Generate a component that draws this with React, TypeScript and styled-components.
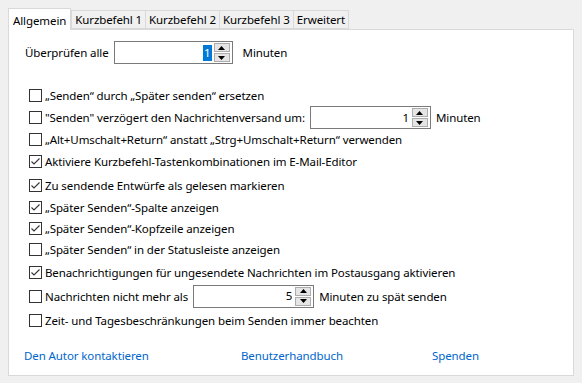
import React from "react";
import styled, { createGlobalStyle } from "styled-components";

const GlobalStyle = createGlobalStyle`
  html, body {
    margin: 0;
    padding: 0;
    background: #f0f0f0;
  }
  body {
    font-family: "Noto Sans", "Open Sans", sans-serif;
    font-size: 11.5px;
    letter-spacing: -0.1px;
    color: #000;
  }
`;

const tabs = ["Allgemein", "Kurzbefehl 1", "Kurzbefehl 2", "Kurzbefehl 3", "Erweitert"];

type Opt = {
  label: string;
  checked: boolean;
  spin?: { value: string; width: number; suffix: string };
  h: number;
};

const options: Opt[] = [
  { label: "„Senden“ durch „Später senden“ ersetzen", checked: false, h: 22 },
  {
    label: "\"Senden\" verzögert den Nachrichtenversand um:",
    checked: false,
    spin: { value: "1", width: 121, suffix: "Minuten" },
    h: 23
  },
  { label: "„Alt+Umschalt+Return“ anstatt „Strg+Umschalt+Return“ verwenden", checked: false, h: 21 },
  { label: "Aktiviere Kurzbefehl-Tastenkombinationen im E-Mail-Editor", checked: true, h: 23 },
  { label: "Zu sendende Entwürfe als gelesen markieren", checked: true, h: 24 },
  { label: "„Später Senden“-Spalte anzeigen", checked: true, h: 21 },
  { label: "„Später Senden“-Kopfzeile anzeigen", checked: true, h: 20 },
  { label: "„Später Senden“ in der Statusleiste anzeigen", checked: false, h: 22 },
  { label: "Benachrichtigungen für ungesendete Nachrichten im Postausgang aktivieren", checked: true, h: 24 },
  {
    label: "Nachrichten nicht mehr als",
    checked: false,
    spin: { value: "5", width: 121, suffix: "Minuten zu spät senden" },
    h: 24
  },
  { label: "Zeit- und Tagesbeschränkungen beim Senden immer beachten", checked: false, h: 24 }
];

export default function App() {
  return (
    <Page>
      <GlobalStyle />
      <TabBar>
        {tabs.map((t, i) => (
          <Tab key={t} $active={i === 0}>
            {t}
          </Tab>
        ))}
      </TabBar>
      <Panel>
        <TopRow>
          <span>Überprüfen alle</span>
          <SpinBox value="1" width={119} selected />
          <span>Minuten</span>
        </TopRow>
        <OptionList>
          {options.map((o, i) => (
            <Option key={i} $h={o.h}>
              <Checkbox $checked={o.checked}>
                {o.checked && (
                  <svg width="11" height="11" viewBox="0 0 11 11">
                    <path d="M1.5 5.5 L4 8 L9.5 2.5" fill="none" stroke="#333" strokeWidth="1.1" />
                  </svg>
                )}
              </Checkbox>
              <Label>{o.label}</Label>
              {o.spin && (
                <>
                  <SpinBox value={o.spin.value} width={o.spin.width} />
                  <Label>{o.spin.suffix}</Label>
                </>
              )}
            </Option>
          ))}
        </OptionList>
        <LinkRow>
          <Link href="#" $w={217}>Den Autor kontaktieren</Link>
          <Link href="#" $w={191}>Benutzerhandbuch</Link>
          <Link href="#">Spenden</Link>
        </LinkRow>
      </Panel>
    </Page>
  );
}

function SpinBox(props: { value: string; width: number; selected?: boolean }) {
  return (
    <Spin style={{ width: props.width }}>
      <SpinValue>
        <ValueText $selected={props.selected}>{props.value}</ValueText>
      </SpinValue>
      <SpinButtons>
        <SpinBtn>
          <svg width="7" height="4" viewBox="0 0 7 4">
            <path d="M0 4 L3.5 0 L7 4 Z" fill="#000" />
          </svg>
        </SpinBtn>
        <SpinBtn>
          <svg width="7" height="4" viewBox="0 0 7 4">
            <path d="M0 0 L3.5 4 L7 0 Z" fill="#000" />
          </svg>
        </SpinBtn>
      </SpinButtons>
    </Spin>
  );
}

const Page = styled.div`
  padding: 8px 8px 0 8px;
  width: 566px;
  height: 375px;
`;

const TabBar = styled.div`
  display: flex;
  align-items: flex-end;
  height: 21px;
`;

const Tab = styled.div<{ $active?: boolean }>`
  box-sizing: border-box;
  height: ${(p) => (p.$active ? "22px" : "19px")};
  margin-bottom: ${(p) => (p.$active ? "-1px" : "0")};
  padding: ${(p) => (p.$active ? "1px 4px 0 4px" : "0 3px")};
  display: flex;
  align-items: center;
  background: ${(p) => (p.$active ? "#fff" : "#f0f0f0")};
  border: 1px solid #d9d9d9;
  border-bottom: ${(p) => (p.$active ? "none" : "1px solid #d9d9d9")};
  margin-left: ${(p) => (p.$active ? "0" : "-1px")};
  position: relative;
  z-index: ${(p) => (p.$active ? 1 : 0)};
  white-space: nowrap;
  &:nth-child(2) {
    margin-left: 0;
  }
`;

const Panel = styled.div`
  box-sizing: border-box;
  background: #fff;
  border: 1px solid #d9d9d9;
  height: 347px;
  padding: 11px 0 0 16px;
  display: flex;
  flex-direction: column;
`;

const TopRow = styled.div`
  display: flex;
  align-items: center;
  gap: 5px;
  height: 23px;
`;

const OptionList = styled.div`
  display: flex;
  flex-direction: column;
  margin-top: 20px;
  padding-left: 4px;
`;

const Option = styled.div<{ $h: number }>`
  display: flex;
  align-items: center;
  height: ${(p) => p.$h}px;
  white-space: nowrap;
`;

const Checkbox = styled.div<{ $checked: boolean }>`
  box-sizing: border-box;
  width: 13px;
  height: 13px;
  border: 1px solid #333;
  background: #fff;
  display: flex;
  align-items: center;
  justify-content: center;
  margin-right: 3px;
  flex-shrink: 0;
`;

const Label = styled.span`
  margin-right: 5px;
`;

const Spin = styled.div`
  box-sizing: border-box;
  height: 23px;
  border: 1px solid #7a7a7a;
  background: #fff;
  display: flex;
  align-items: stretch;
  padding: 1px 2px 1px 1px;
  margin-right: 5px;
`;

const SpinValue = styled.div`
  flex: 1;
  display: flex;
  align-items: center;
  justify-content: flex-end;
  padding-right: 2px;
`;

const ValueText = styled.span<{ $selected?: boolean }>`
  background: ${(p) => (p.$selected ? "#0078d7" : "transparent")};
  color: ${(p) => (p.$selected ? "#fff" : "#000")};
  line-height: 16px;
  padding: 0 1px;
`;

const SpinButtons = styled.div`
  width: 16px;
  display: flex;
  flex-direction: column;
  gap: 1px;
`;

const SpinBtn = styled.div`
  flex: 1;
  box-sizing: border-box;
  background: #e5e5e5;
  border: 1px solid #adadad;
  display: flex;
  align-items: center;
  justify-content: center;
`;

const LinkRow = styled.div`
  display: flex;
  align-items: center;
  margin-top: 16px;
  margin-left: -1px;
`;

const Link = styled.a<{ $w?: number }>`
  color: #0066cc;
  text-decoration: none;
  width: ${(p) => (p.$w ? `${p.$w}px` : "auto")};
`;
